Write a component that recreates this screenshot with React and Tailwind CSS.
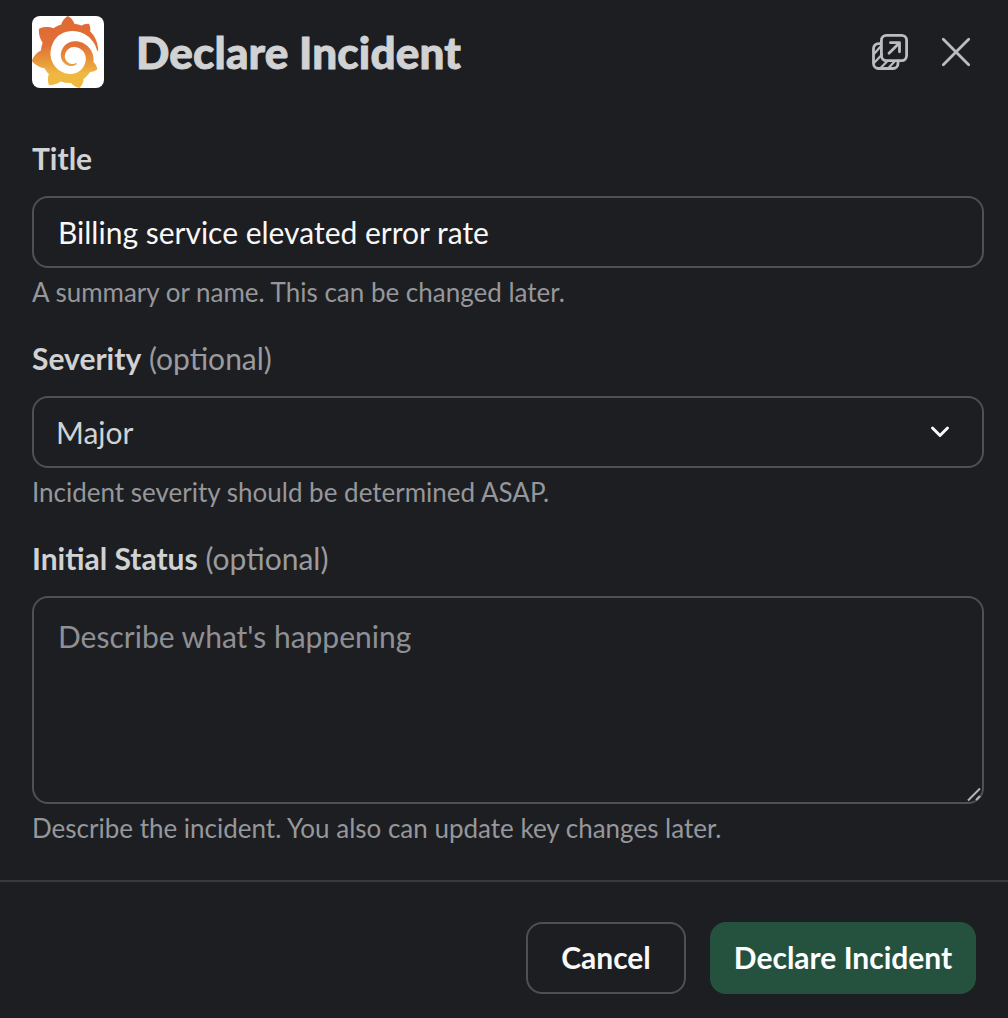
import React from "react";
import { SiGrafana } from "react-icons/si";

function GrafanaTile() {
  return (
    <div className="flex size-[72px] items-center justify-start overflow-hidden rounded-lg bg-white">
      <svg width="0" height="0" className="absolute">
        <linearGradient id="logo" x1="0" y1="0" x2="0" y2="1">
          <stop offset="0.1" stopColor="#e06a34" />
          <stop offset="0.4" stopColor="#e17036" />
          <stop offset="0.62" stopColor="#e8953b" />
          <stop offset="0.8" stopColor="#efb840" />
        </linearGradient>
      </svg>
      <SiGrafana className="-ml-[3px] size-[72px] shrink-0" style={{ fill: "url(#logo)" }} />
    </div>
  );
}

function PopOutIcon() {
  return (
    <svg className="ml-auto" width="40" height="40" viewBox="0 0 40 40" fill="none" stroke="#bcbdbe" strokeWidth="2.8" strokeLinecap="round" strokeLinejoin="round">
      <rect x="11.4" y="3.4" width="25.2" height="25.2" rx="5" />
      <path d="M11 11.6H8.5a5 5 0 0 0-5 5V31.500a5 5 0 0 0 5 5H23a5 5 0 0 0 5-5V29" />
      <path strokeWidth="2.2" d="M4 22l7-8M4 31l8-8.500M10.500 36l7-7M18.500 36l6.500-7" />
      <path strokeWidth="2.8" d="M19 21.300L29.300 11M20.500 10.700H29.500V19.800" />
    </svg>
  );
}

function Field({ label, optional, hint, children }) {
  return (
    <div>
      <label className="block h-9 text-[30px] leading-9 font-bold text-[#d1d2d3]">
        {label}
        {optional && <span className="font-normal text-[#9a9b9e]"> (optional)</span>}
      </label>
      <div className="mt-5">{children}</div>
      <p className="mt-[6px] h-9 text-[26px] leading-9 text-[#96979b]">{hint}</p>
    </div>
  );
}

export default function App() {
  return (
    <div className="flex h-[1018px] w-[1008px] flex-col overflow-hidden bg-[#1d1e22] font-['Lato',sans-serif]">
      <header className="flex h-[104px] shrink-0 items-center pr-[36px] pl-8">
        <GrafanaTile />
        <h1 className="ml-8 text-[44px] leading-[60px] font-black tracking-[0.15px] text-[#d1d2d3] [-webkit-text-stroke:0.9px_#d1d2d3]">Declare Incident</h1>
        <PopOutIcon />
        <svg className="ml-[30px]" width="32" height="32" viewBox="0 0 32 32" stroke="#bcbdbe" strokeWidth="2.8" strokeLinecap="round">
          <path d="M3.300 3.300L28.700 28.700M28.700 3.300L3.300 28.700" />
        </svg>
      </header>
      <main className="flex h-[776px] shrink-0 flex-col gap-[30px] pt-9 pr-6 pl-8">
        <Field label="Title" hint="A summary or name. This can be changed later.">
          <input className="block h-[72px] w-full rounded-[16px] border-2 border-[#4f5053] px-6 text-[30px] leading-9 text-[#f8f8f8]" defaultValue="Billing service elevated error rate" />
        </Field>
        <Field label="Severity" optional hint="Incident severity should be determined ASAP.">
          <button className="flex h-[72px] w-full items-center justify-between rounded-[16px] border-2 border-[#4f5053] pr-[30px] pl-[22px] text-[30px] leading-9 text-[#d1d2d3]">
            <span>Major</span>
            <svg width="24" height="24" viewBox="0 0 24 24" fill="none" stroke="#f8f8f8" strokeWidth="3" strokeLinecap="round" strokeLinejoin="round">
              <path d="M4.500 8L12 15.500L19.500 8" />
            </svg>
          </button>
        </Field>
        <Field label="Initial Status" optional hint="Describe the incident. You also can update key changes later.">
          <div className="relative">
            <textarea className="block h-[208px] w-full resize-none rounded-[16px] border-2 border-[#4f5053] px-6 pt-5 text-[30px] leading-9 placeholder:text-[#8f9094]" placeholder="Describe what's happening" />
            <svg className="absolute right-[2px] bottom-[2px]" width="16" height="16" viewBox="0 0 16 16" stroke="#b4b5b7" strokeWidth="2">
              <path d="M2 14.500L14 2.500M10 14L14 10" />
            </svg>
          </div>
        </Field>
      </main>
      <footer className="flex h-[138px] shrink-0 items-start justify-end gap-6 border-t-2 border-[#38393d] pt-10 pr-8 text-[30px] leading-9 font-bold">
        <button className="h-[72px] w-40 rounded-[16px] border-2 border-[#4f5053] pb-[2px] text-[#f8f8f8]">Cancel</button>
        <button className="h-[72px] w-[266px] rounded-[16px] bg-[#24523f] pb-[2px] text-white">Declare Incident</button>
      </footer>
    </div>
  );
}
